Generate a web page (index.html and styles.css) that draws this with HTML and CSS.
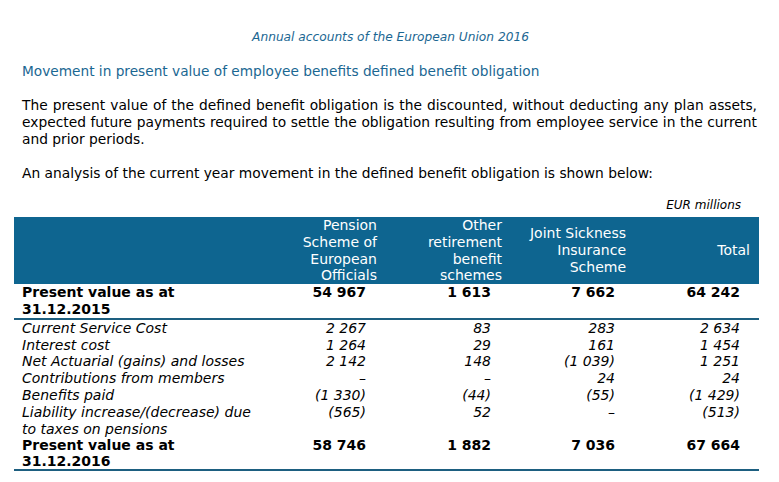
FILE: index.html
```html
<!DOCTYPE html>
<html>
<head>
<meta charset="utf-8">
<link rel="stylesheet" href="styles.css">
</head>
<body>
<div class="page">
  <div class="running">Annual accounts of the European Union 2016</div>
  <h2 class="heading">Movement in present value of employee benefits defined benefit obligation</h2>
  <p class="para">The present value of the defined benefit obligation is the discounted, without deducting any plan assets, expected future payments required to settle the obligation resulting from employee service in the current and prior periods.</p>
  <p class="para">An analysis of the current year movement in the defined benefit obligation is shown below:</p>
  <div class="unit">EUR millions</div>
  <table class="tbl">
    <colgroup>
      <col class="c-label"><col class="c-pen"><col class="c-oth"><col class="c-jsis"><col class="c-tot">
    </colgroup>
    <thead>
      <tr>
        <th class="h-label"></th>
        <th>Pension<br>Scheme of<br>European<br>Officials</th>
        <th>Other<br>retirement<br>benefit<br>schemes</th>
        <th class="h-jsis">Joint Sickness<br>Insurance<br>Scheme</th>
        <th class="h-tot">Total</th>
      </tr>
    </thead>
    <tbody>
      <tr class="total-row">
        <td class="lbl">Present value as at<br>31.12.2015</td>
        <td>54 967</td><td>1 613</td><td>7 662</td><td class="tot">64 242</td>
      </tr>
      <tr class="mv first">
        <td class="lbl">Current Service Cost</td>
        <td>2 267</td><td>83</td><td>283</td><td class="tot">2 634</td>
      </tr>
      <tr class="mv">
        <td class="lbl">Interest cost</td>
        <td>1 264</td><td>29</td><td>161</td><td class="tot">1 454</td>
      </tr>
      <tr class="mv">
        <td class="lbl">Net Actuarial (gains) and losses</td>
        <td>2 142</td><td>148</td><td>(1 039)</td><td class="tot">1 251</td>
      </tr>
      <tr class="mv">
        <td class="lbl">Contributions from members</td>
        <td>–</td><td>–</td><td>24</td><td class="tot">24</td>
      </tr>
      <tr class="mv">
        <td class="lbl">Benefits paid</td>
        <td>(1 330)</td><td>(44)</td><td>(55)</td><td class="tot">(1 429)</td>
      </tr>
      <tr class="mv">
        <td class="lbl">Liability increase/(decrease) due<br>to taxes on pensions</td>
        <td>(565)</td><td>52</td><td>–</td><td class="tot">(513)</td>
      </tr>
      <tr class="total-row last">
        <td class="lbl">Present value as at<br>31.12.2016</td>
        <td>58 746</td><td>1 882</td><td>7 036</td><td class="tot">67 664</td>
      </tr>
    </tbody>
  </table>
</div>
</body>
</html>
```
FILE: styles.css
```css
html, body {
  margin: 0;
  padding: 0;
  background: #ffffff;
}
body {
  font-family: "DejaVu Sans", Verdana, sans-serif;
  color: #000000;
}
.page {
  width: 779px;
  padding-top: 29px;
}
.running {
  text-align: center;
  font-style: italic;
  font-size: 12.2px;
  line-height: 17px;
  color: #1b6792;
  margin: 0 0 0 2px;
}
.heading {
  margin: 17px 0 0 22px;
  font-weight: normal;
  font-size: 13.7px;
  line-height: 17px;
  color: #1b6792;
}
.para {
  margin: 17px 22px 0 22px;
  font-size: 13.8px;
  line-height: 17px;
  text-align: justify;
}
.unit {
  margin: 16px 38px 0 0;
  text-align: right;
  font-style: italic;
  font-size: 12px;
  line-height: 14px;
}
.tbl {
  margin: 5px 0 0 14px;
  width: 745px;
  border-collapse: collapse;
  table-layout: fixed;
  font-size: 14px;
  line-height: 16.8px;
}
.c-label { width: 248px; }
.c-pen { width: 120px; }
.c-oth { width: 125px; }
.c-jsis { width: 124px; }
.c-tot { width: 128px; }
.tbl thead th {
  background: #0e6590;
  color: #ffffff;
  font-weight: normal;
  text-align: right;
  vertical-align: middle;
  padding: 0 5px 0 0;
  height: 66px;
}
.tbl thead th.h-tot { padding-right: 9px; }
.tbl td {
  padding: 0 16px 0 0;
  text-align: right;
  vertical-align: top;
}
.tbl td.tot { padding-right: 19px; }
.tbl td.lbl {
  text-align: left;
  padding: 0 0 0 8px;
}
.total-row td {
  font-weight: bold;
  border-bottom: 2px solid #1d5f80;
}
.total-row.last td {
  line-height: 16px;
}
.mv td {
  font-style: italic;
}
```
